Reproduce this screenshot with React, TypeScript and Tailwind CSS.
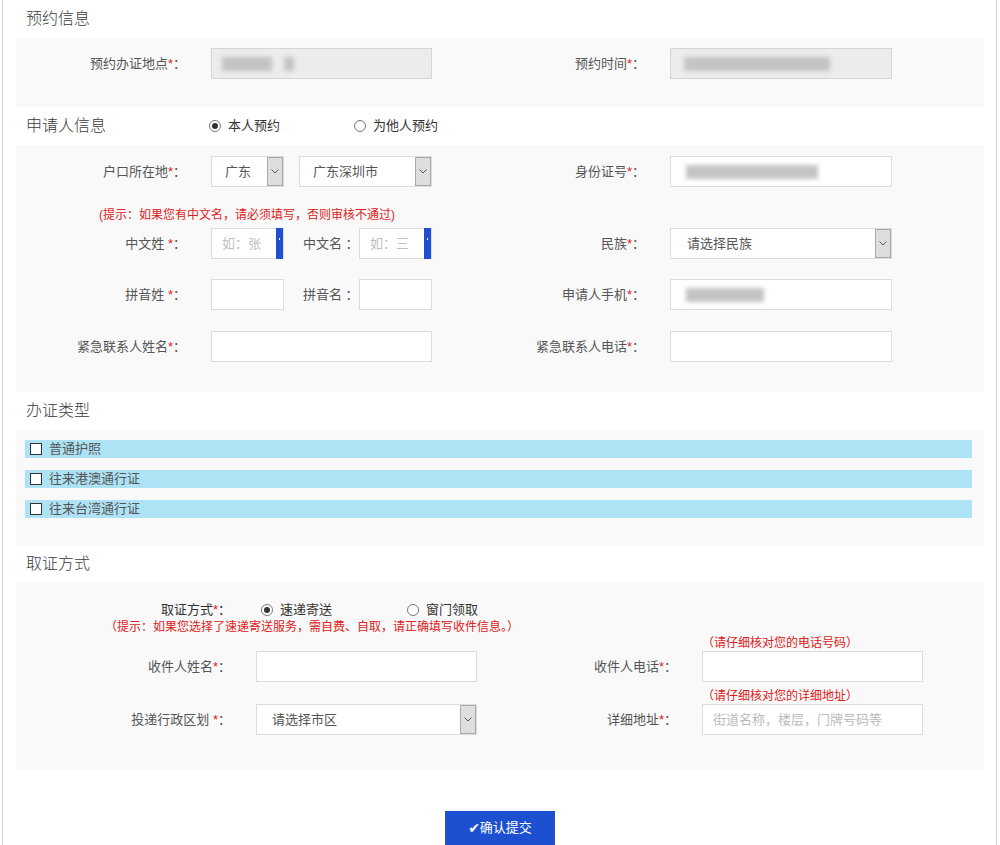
import React from "react";

const Star = () => <span className="text-[#e02020]">*</span>;

const Chevron = () => (
  <svg width="8" height="5" viewBox="0 0 8 5" fill="none">
    <path d="M0.5 0.5 L4 4 L7.5 0.5" stroke="#555" strokeWidth="1" />
  </svg>
);

function Radio({ checked }: { checked?: boolean }) {
  return (
    <span className="flex h-[12px] w-[12px] items-center justify-center rounded-full border border-[#777] bg-white">
      {checked ? <span className="h-[6px] w-[6px] rounded-full bg-[#333]" /> : null}
    </span>
  );
}

function TextBox({ w, children }: { w: string; children?: React.ReactNode }) {
  return (
    <div className={`flex h-[31px] items-center border border-[#dcdcdc] bg-white ${w}`}>{children}</div>
  );
}

function Select({ w, text, pl }: { w: string; text: string; pl: string }) {
  return (
    <div className={`flex h-[31px] items-center border border-[#dcdcdc] bg-white text-[13px] text-[#555] ${w}`}>
      <span className={`${pl} whitespace-nowrap`}>{text}</span>
      <div className="ml-auto flex h-[29px] w-[16px] items-center justify-center border border-[#a9a9a9] bg-[#dedede]">
        <Chevron />
      </div>
    </div>
  );
}

function NameBox({ ph }: { ph: string }) {
  return (
    <div className="flex h-[31px] w-[73px] items-center border border-[#dcdcdc] bg-white">
      <span className="pl-[10px] text-[13px] text-[#c0c0c0]">{ph}</span>
      <div className="relative ml-auto h-[31px] w-[7px] bg-[#1f4fd0]">
        <span className="absolute left-[3px] top-[10px] h-[2px] w-[1px] bg-white" />
      </div>
    </div>
  );
}

function Blob({ w, ml }: { w: string; ml: string }) {
  return <div className={`h-[14px] bg-[#c4c4c4] blur-[2px] ${w} ${ml}`} />;
}

export default function App() {
  return (
    <div className="h-[845px] w-[1000px] overflow-hidden bg-white font-['Liberation_Sans','Noto_Sans_CJK_SC',sans-serif] text-[13px] text-[#555]">
      <div className="ml-[2px] h-[845px] w-[995px] border-x border-[#d4d4d4] pl-[13px] pr-[12px]">
        {/* 预约信息 */}
        <div className="flex h-[38px] items-center pl-[10px] text-[16px] font-light text-[#3a3a3a]">预约信息</div>
        <div className="bg-[#f9f9f9] pb-[28px] pt-[10px]">
          <div className="flex h-[31px] items-center">
            <div className="flex w-[444px] items-center">
              <div className="w-[170px] text-right">预约办证地点<Star />：</div>
              <div className="ml-[25px] flex h-[31px] w-[221px] items-center border border-[#d5d5d5] bg-[#ececec]">
                <Blob w="w-[50px]" ml="ml-[10px]" />
                <Blob w="w-[10px]" ml="ml-[12px]" />
              </div>
            </div>
            <div className="w-[185px] text-right">预约时间<Star />：</div>
            <div className="ml-[25px] flex h-[31px] w-[222px] items-center border border-[#d5d5d5] bg-[#ececec]">
              <Blob w="w-[146px]" ml="ml-[13px]" />
            </div>
          </div>
        </div>

        {/* 申请人信息 */}
        <div className="flex h-[38px] items-center">
          <div className="w-[193px] pl-[10px] text-[16px] font-light text-[#3a3a3a]">申请人信息</div>
          <Radio checked />
          <span className="ml-[7px] text-[#333]">本人预约</span>
          <span className="ml-[74px]"><Radio /></span>
          <span className="ml-[7px] text-[#333]">为他人预约</span>
        </div>
        <div className="bg-[#f9f9f9] pb-[30px] pt-[11px]">
          <div className="flex h-[31px] items-center">
            <div className="flex w-[444px] items-center">
              <div className="w-[170px] text-right">户口所在地<Star />：</div>
              <div className="ml-[25px]"><Select w="w-[73px]" text="广东" pl="pl-[13px]" /></div>
              <div className="ml-[15px]"><Select w="w-[133px]" text="广东深圳市" pl="pl-[13px]" /></div>
            </div>
            <div className="w-[185px] text-right">身份证号<Star />：</div>
            <div className="ml-[25px]">
              <TextBox w="w-[222px]">
                <Blob w="w-[132px]" ml="ml-[15px]" />
              </TextBox>
            </div>
          </div>

          <div className="mt-[21px] h-[14px] pl-[83px] text-[12px] leading-[14px] text-[#e02020]">
            (提示：如果您有中文名，请必须填写，否则审核不通过)
          </div>

          <div className="mt-[6px] flex h-[31px] items-center">
            <div className="flex w-[444px] items-center">
              <div className="w-[170px] text-right">中文姓 <Star />：</div>
              <div className="ml-[25px]"><NameBox ph="如：张" /></div>
              <div className="ml-[19px] w-[56px] whitespace-nowrap">中文名&nbsp;：</div>
              <NameBox ph="如：三" />
            </div>
            <div className="w-[185px] text-right">民族<Star />：</div>
            <div className="ml-[25px]"><Select w="w-[222px]" text="请选择民族" pl="pl-[16px]" /></div>
          </div>

          <div className="mt-[20px] flex h-[31px] items-center">
            <div className="flex w-[444px] items-center">
              <div className="w-[170px] text-right">拼音姓 <Star />：</div>
              <div className="ml-[25px]"><TextBox w="w-[73px]" /></div>
              <div className="ml-[19px] w-[56px] whitespace-nowrap">拼音名&nbsp;：</div>
              <TextBox w="w-[73px]" />
            </div>
            <div className="w-[185px] text-right">申请人手机<Star />：</div>
            <div className="ml-[25px]">
              <TextBox w="w-[222px]">
                <Blob w="w-[78px]" ml="ml-[15px]" />
              </TextBox>
            </div>
          </div>

          <div className="mt-[21px] flex h-[31px] items-center">
            <div className="flex w-[444px] items-center">
              <div className="w-[170px] text-right">紧急联系人姓名<Star />：</div>
              <div className="ml-[25px]"><TextBox w="w-[221px]" /></div>
            </div>
            <div className="w-[185px] text-right">紧急联系人电话<Star />：</div>
            <div className="ml-[25px]"><TextBox w="w-[222px]" /></div>
          </div>
        </div>

        {/* 办证类型 */}
        <div className="flex h-[38px] items-center pl-[10px] text-[16px] font-light text-[#3a3a3a]">办证类型</div>
        <div className="flex flex-col gap-[12px] bg-[#f9f9f9] pb-[27px] pl-[9px] pr-[12px] pt-[10px]">
          {["普通护照", "往来港澳通行证", "往来台湾通行证"].map((t) => (
            <div key={t} className="flex h-[18px] items-center bg-[#ade3f5] pl-[5px]">
              <span className="h-[12px] w-[12px] border border-[#333] bg-white" />
              <span className="ml-[7px]">{t}</span>
            </div>
          ))}
        </div>

        {/* 取证方式 */}
        <div className="flex h-[38px] items-center pl-[10px] text-[16px] font-light text-[#3a3a3a]">取证方式</div>
        <div className="bg-[#f9f9f9] pb-[34px] pt-[17px]">
          <div className="flex h-[20px] items-center">
            <div className="w-[215px] text-right text-[#333]">取证方式<Star />：</div>
            <span className="ml-[30px]"><Radio checked /></span>
            <span className="ml-[7px] text-[#333]">速递寄送</span>
            <span className="ml-[75px]"><Radio /></span>
            <span className="ml-[7px] text-[#333]">窗门领取</span>
          </div>
          <div className="h-[14px] pl-[89px] text-[12px] leading-[14px] text-[#e02020]">
            （提示：如果您选择了速递寄送服务，需自费、自取，请正确填写收件信息。）
          </div>

          <div className="mt-[2px] flex items-end">
            <div className="flex w-[484px] items-center">
              <div className="w-[215px] text-right">收件人姓名<Star />：</div>
              <div className="ml-[25px]"><TextBox w="w-[221px]" /></div>
            </div>
            <div className="flex h-[31px] w-[177px] items-center justify-end">收件人电话<Star />：</div>
            <div className="ml-[25px] flex flex-col">
              <div className="h-[14px] text-[12px] leading-[14px] text-[#e02020]">（请仔细核对您的电话号码）</div>
              <div className="mt-[1px]"><TextBox w="w-[221px]" /></div>
            </div>
          </div>

          <div className="mt-[7px] flex items-end">
            <div className="flex w-[484px] items-center">
              <div className="w-[215px] text-right">投递行政区划 <Star />：</div>
              <div className="ml-[25px]"><Select w="w-[221px]" text="请选择市区" pl="pl-[15px]" /></div>
            </div>
            <div className="flex h-[31px] w-[177px] items-center justify-end">详细地址<Star />：</div>
            <div className="ml-[25px] flex flex-col">
              <div className="h-[14px] text-[12px] leading-[14px] text-[#e02020]">（请仔细核对您的详细地址）</div>
              <div className="mt-[1px]">
                <TextBox w="w-[221px]">
                  <span className="pl-[10px] text-[13px] text-[#bbb]">街道名称，楼层，门牌号码等</span>
                </TextBox>
              </div>
            </div>
          </div>
        </div>

        <div className="mt-[42px] flex justify-center">
          <button className="flex h-[34px] w-[110px] items-center justify-center bg-[#1d50d0] text-[13px] text-white">
            <span className="font-['DejaVu_Sans',sans-serif] text-[14px] leading-none">✔</span>
            <span>确认提交</span>
          </button>
        </div>
      </div>
    </div>
  );
}
